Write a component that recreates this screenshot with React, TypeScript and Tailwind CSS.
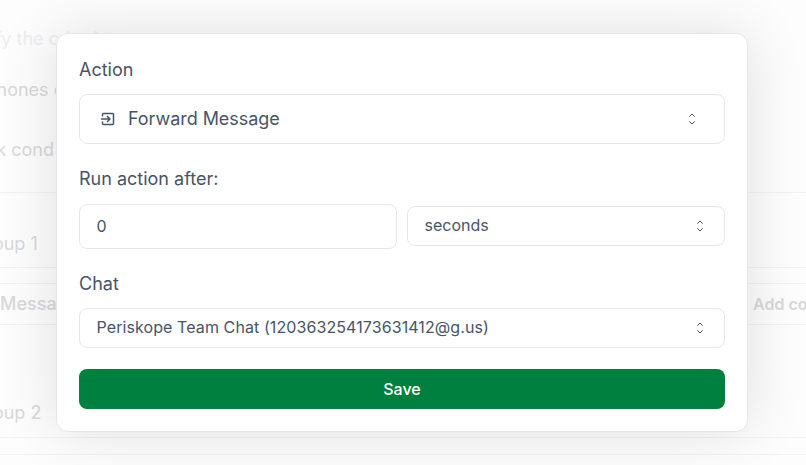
function UpDown() {
    return (
        <svg width="16" height="16" viewBox="0 0 16 16" fill="none" stroke="#475467" strokeWidth="1" strokeLinecap="round" strokeLinejoin="round" className="shrink-0">
            <path d="M5.6 5.4 8 3 10.4 5.4" />
            <path d="M5.6 10.6 8 13 10.4 10.6" />
        </svg>
    )
}

function ForwardIcon() {
    return (
        <svg width="16" height="16" viewBox="0 0 16 16" fill="none" stroke="#475467" strokeWidth="1.5" strokeLinecap="round" strokeLinejoin="round" className="shrink-0">
            <path d="M2.5 5V3.5a1 1 0 0 1 1-1h9a1 1 0 0 1 1 1v9a1 1 0 0 1-1 1h-9a1 1 0 0 1-1-1V11" />
            <path d="M1.5 8h8M7.5 5.5 10 8l-2.5 2.5" />
        </svg>
    )
}

function Background() {
    return (
        <div className="h-[465px] overflow-hidden bg-[#fdfdfd] text-[#d8d8dc] text-lg">
            <div className="pt-[25px] -ml-[53px] leading-[28px] whitespace-nowrap text-[#ecedf0]">Specify the criteria</div>
            <div className="mt-[23px] -ml-[15px] leading-[28px]">Phones c</div>
            <div className="mt-[32px] -ml-[30px] leading-[28px]">Tick cond</div>
            <div className="mt-[28px] h-px bg-[#f3f3f4]" />
            <div className="mt-[37px] -ml-[27px] leading-[28px]">Group 1</div>
            <div className="mt-[9px] h-px bg-[#f3f3f4]" />
            <div className="flex items-center h-[42px] mt-[15px] border-y border-[#f3f3f4] w-[806px]">
                <span className="w-[753px] shrink-0 font-medium">Message</span>
                <span className="text-[16px] font-semibold whitespace-nowrap">Add condition</span>
            </div>
            <div className="mt-[74px] -ml-[27px] leading-[28px]">Group 2</div>
            <div className="mt-[10px] h-px bg-[#f3f3f4]" />
            <div className="mt-[16px] h-px bg-[#f3f3f4]" />
        </div>
    )
}

export default function App() {
    return (
        <div className="relative h-[465px] w-[806px] overflow-hidden font-['Inter',sans-serif]">
            <Background />

            {/* Modal */}
            <div className="absolute left-[56px] top-[33px] w-[692px] h-[399px] rounded-xl border border-[#e5e7eb] bg-white pl-[22px] pr-[22px] pt-[22px] text-[#475467] shadow-[0_0_60px_rgba(0,0,0,0.12)]">
                <div className="text-lg leading-[28px]">Action</div>
                <div className="mt-[10px] flex h-[50px] items-center rounded-lg border border-[#e5e7eb] pl-[20px] pr-[24px] text-lg">
                    <ForwardIcon />
                    <span className="ml-[12px] flex-1 tracking-[-0.05px]">Forward Message</span>
                    <UpDown />
                </div>

                <div className="mt-[21px] text-lg leading-[28px]">Run action after:</div>
                <div className="mt-[11px] flex items-start gap-[10px]">
                    <div className="flex h-[45px] w-[318px] items-center rounded-lg border border-[#e5e7eb] px-[16.5px] pb-[2px] text-base">0</div>
                    <div className="mt-[2px] flex h-[40px] w-[318px] items-center justify-between rounded-lg border border-[#e5e7eb] pl-[16.5px] pr-[16px] text-base">
                        <span className="pb-[2px]">seconds</span>
                        <UpDown />
                    </div>
                </div>

                <div className="mt-[21px] text-lg leading-[28px]">Chat</div>
                <div className="mt-[10px] flex h-[40px] items-center justify-between rounded-lg border border-[#e5e7eb] pl-[16.5px] pr-[16px] text-base">
                    <span className="pb-[2px] tracking-[0.09px]">Periskope Team Chat (120363254173631412@g.us)</span>
                    <UpDown />
                </div>

                <button className="mt-[21px] flex h-[40px] w-full items-center justify-center rounded-lg bg-[#00803e] text-base font-medium text-white">Save</button>
            </div>
        </div>
    )
}
